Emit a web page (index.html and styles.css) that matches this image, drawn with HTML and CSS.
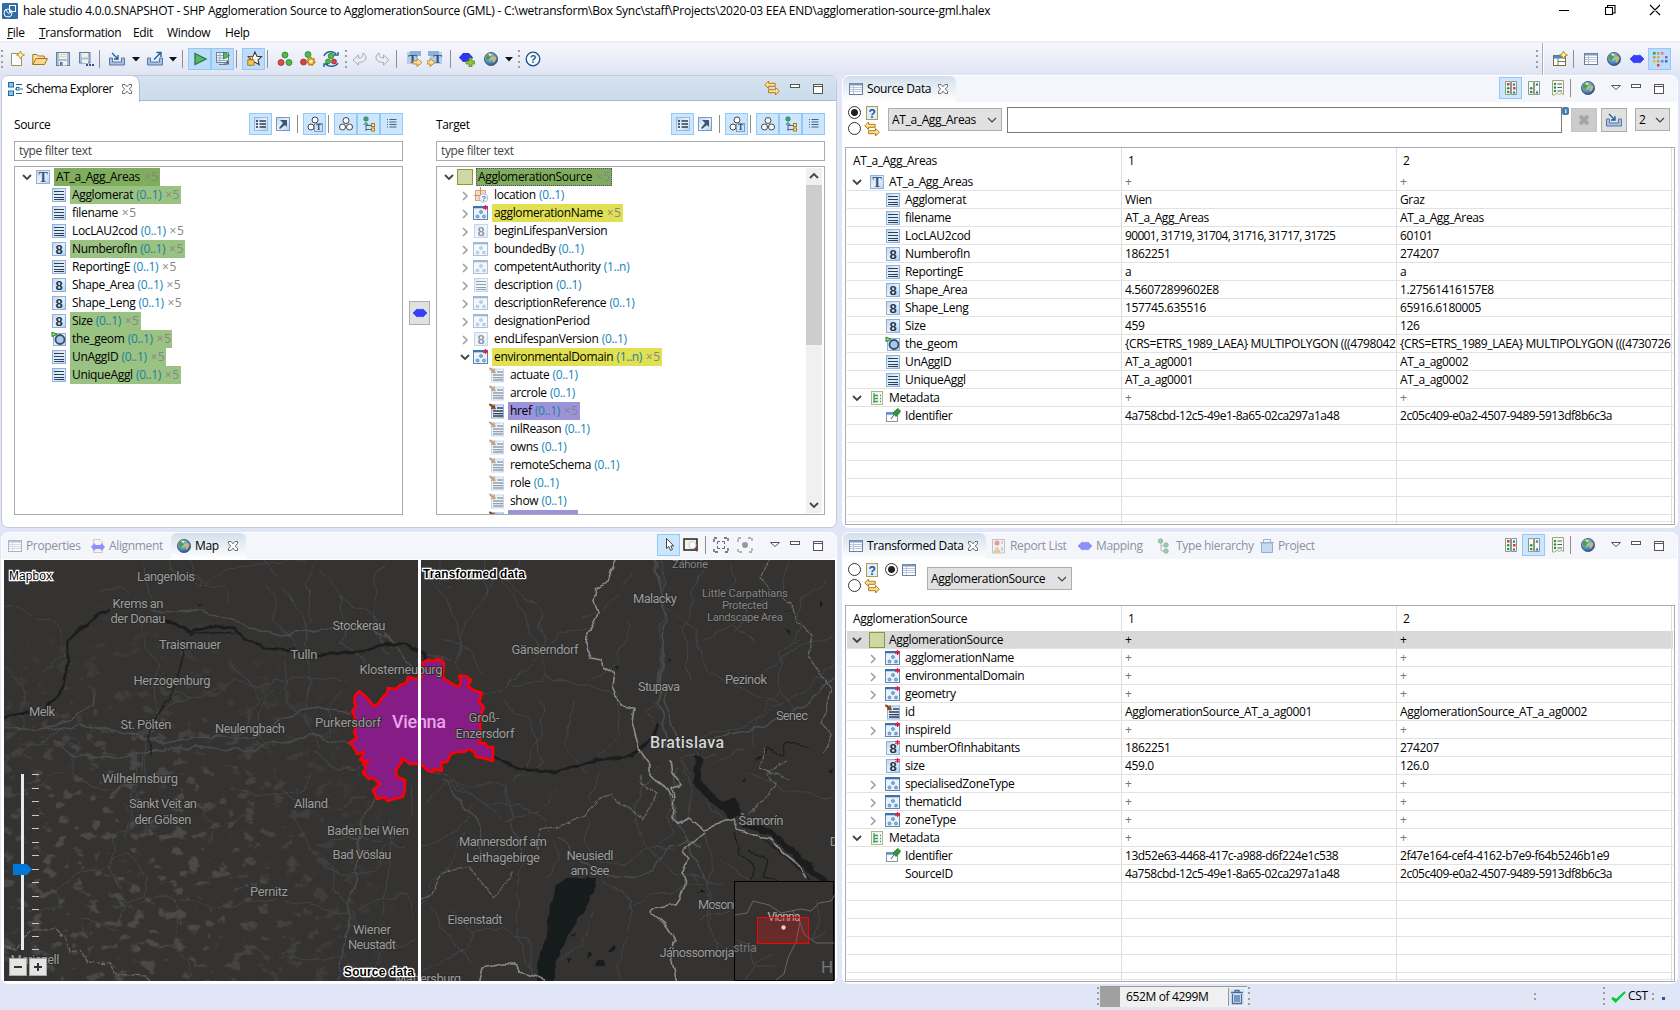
FILE: index.html
```html
<!DOCTYPE html>
<html lang="en">
<head>
<meta charset="utf-8">
<title>hale studio</title>
<link rel="stylesheet" href="styles.css">
</head>
<body>
<svg class="defs" aria-hidden="true">
<defs>
<linearGradient id="gb" x1="0" y1="0" x2="1" y2="1"><stop offset="0" stop-color="#b9d3f1"/><stop offset=".5" stop-color="#e8f4fd"/><stop offset="1" stop-color="#b4cdee"/></linearGradient>
<radialGradient id="gg" cx=".4" cy=".35" r=".7"><stop offset="0" stop-color="#d8f0fa"/><stop offset=".45" stop-color="#6aa3c8"/><stop offset="1" stop-color="#1f4c86"/></radialGradient>
<linearGradient id="gy" x1="0" y1="0" x2="0" y2="1"><stop offset="0" stop-color="#fff6cf"/><stop offset="1" stop-color="#f2c868"/></linearGradient>
</defs>
<symbol id="str" viewBox="0 0 16 16"><rect x="1.500" y="1.500" width="13" height="13" fill="url(#gb)" stroke="#8fb0dc"/><path d="M3 4.500h10M3 7.500h10M3 10.500h10M3 12.500h10" stroke="#2e4056" stroke-width="1.200"/></symbol>
<symbol id="num" viewBox="0 0 16 16"><rect x="1.500" y="1.500" width="13" height="13" fill="url(#gb)" stroke="#8fb0dc"/><text x="8" y="12.600" text-anchor="middle" font-family="Liberation Sans" font-weight="700" font-size="13" fill="#22364c">8</text></symbol>
<symbol id="typ" viewBox="0 0 16 16"><rect x="1.500" y="1.500" width="13" height="13" fill="url(#gb)" stroke="#8fb0dc"/><text x="8" y="12.500" text-anchor="middle" font-family="Liberation Serif" font-weight="700" font-size="14" fill="#3c5676">T</text></symbol>
<symbol id="cpx" viewBox="0 0 16 16"><rect x=".5" y="1.500" width="14" height="13" fill="#e8f3fc" stroke="#5f84b4"/><path d="M0 2.200h15" stroke="#3973ab" stroke-width="2.200"/><g fill="#8db4e0" stroke="#3c6ba8" stroke-width=".6"><circle cx="8" cy="7" r="1.500"/><circle cx="4.500" cy="11.500" r="1.500"/><circle cx="11" cy="11.500" r="1.500"/></g></symbol>
<symbol id="star" viewBox="0 0 16 16"><path d="M12.500 0v5M10.200 1.200l4.600 2.600M14.800 1.200l-4.600 2.600" stroke="#f01840" stroke-width="1.200"/></symbol>
<symbol id="att" viewBox="0 0 16 16"><rect x="2.500" y="2" width="12" height="13" fill="url(#gb)" stroke="#8fb0dc"/><path d="M8 5h6M4 8h10M4 10.700h10M4 13h10" stroke="#2e4056" stroke-width="1.300"/><path d="M0 1h2l3 2.500V1.500L6.500 6 2 5.500h2L1 2.500z" fill="#8a4208" stroke="#8a4208" stroke-width=".6"/></symbol>
<symbol id="geo" viewBox="0 0 16 16"><rect x="2.500" y="2.500" width="12" height="12" fill="url(#gb)" stroke="#8fb0dc"/><circle cx="9" cy="8.500" r="4.500" fill="#a9c8ea" stroke="#3b4d68" stroke-width="1.800"/><path d="M1 1l5 2.300-5 2.200z" fill="#9fe08a" stroke="#14861e"/></symbol>
<symbol id="box" viewBox="0 0 16 16"><rect x=".5" y=".5" width="15" height="15" fill="#cfd7a4" stroke="#8a9a32"/></symbol>
<symbol id="loc" viewBox="0 0 16 16"><rect x="2.500" y="3.500" width="10" height="10" fill="#f6d9c2" stroke="#dba378"/><path d="M7.500 0v14M1 8.500h13" stroke="#c98f68"/><circle cx="10.500" cy="11" r="4.200" fill="#edf4fb" stroke="#a9bdd8"/><text x="10.500" y="14" text-anchor="middle" font-family="Liberation Sans" font-weight="700" font-size="8" fill="#5683b4">?</text></symbol>
<symbol id="meta" viewBox="0 0 16 16"><rect x="2.500" y="1.500" width="11" height="13" fill="#f2faf2" stroke="#a7b78b"/><path d="M5 3v10M5 5.500h4M5 8.500h4M5 11.500h4M11 5.500h1M11 8.500h1M11 11.500h1" stroke="#3f9a5a" stroke-width="1.300" fill="none"/></symbol>
<symbol id="idf" viewBox="0 0 16 16"><rect x="1.500" y="4.500" width="11" height="9" fill="#fff" stroke="#8a93a8"/><path d="M1 5.500h10" stroke="#5c93cc" stroke-width="2.500"/><path d="M6 11l3-4" stroke="#555"/><path d="M8 5l3-3 2-1.500L15.500 3 14 5.500 11 8.500z" fill="#2f9a3c" stroke="#1a6a26" stroke-width=".7"/></symbol>
<symbol id="tab" viewBox="0 0 16 16"><rect x="1.500" y="2.500" width="13" height="11" fill="#fff" stroke="#6b7f9e"/><path d="M2 3.500h12" stroke="#7e97bb" stroke-width="2"/><path d="M2 6.500h12M2 8.500h12M2 10.500h12M5.500 4v9" stroke="#b9c6da"/></symbol>
<symbol id="globe" viewBox="0 0 16 16"><circle cx="8" cy="8" r="6.600" fill="url(#gg)" stroke="#3d5877" stroke-width=".8"/><path d="M3 5l3-2.500 3 1-.5 2.500L6.500 8 5 10 3 8z" fill="#5a9a45"/><path d="M9 6.500l3-1.500 1.500 2L12 10.500l-2 1.500-.5-3z" fill="#cfb56a"/><path d="M5 2.500l4 1-2 2z" fill="#e9f4d0"/></symbol>
<symbol id="swap" viewBox="0 0 16 16"><path d="M.8 4.800L4.600 1v2.300h6.600v3H4.600v2.300z" fill="url(#gy)" stroke="#b87a0e"/><path d="M15.300 11.200l-3.800-3.800v2.300H4.600v3h6.900V15z" fill="url(#gy)" stroke="#b87a0e"/></symbol>
<symbol id="help" viewBox="0 0 16 16"><rect x="2.500" y="1.500" width="11" height="13" fill="#dff0fb" stroke="#b09a55"/><text x="8" y="12.500" text-anchor="middle" font-family="Liberation Sans" font-weight="700" font-size="12" fill="#17559c">?</text></symbol>
<symbol id="blue" viewBox="0 0 16 16"><path d="M1 8l4-4 1 .5h4l1-.5 4 4-4 4-1-.5H6l-1 .5z" fill="#3a3cff" stroke="#2a50f0" stroke-width=".8"/></symbol>
<symbol id="x" viewBox="0 0 12 12"><path d="M1.500 1.500H4l2 2.300 2-2.300h2.500v2.200L8.300 6l2.200 2.300v2.200H8L6 8.200l-2 2.300H1.500V8.300L3.700 6 1.500 3.700z" fill="#fdfdfd" stroke="#5a5a5a" stroke-width=".9"/></symbol>
<symbol id="schema" viewBox="0 0 16 16"><g fill="#8cc4f0" stroke="#1c6aa0"><rect x="1.500" y="1.500" width="5" height="4.500"/><rect x="1.500" y="10" width="5" height="4.500"/></g><path d="M9 3.500h6M8 8h2M13 8h3M9 12.500h6" stroke="#1c6aa0"/><rect x="9.500" y="6.500" width="2.500" height="2.500" fill="#fff" stroke="#1c6aa0"/></symbol>
<symbol id="min" viewBox="0 0 12 12"><rect x="1.500" y="1.500" width="9" height="3" fill="#fff" stroke="#555"/></symbol>
<symbol id="max" viewBox="0 0 12 12"><rect x="1.500" y="1.500" width="9" height="9" fill="#fff" stroke="#555"/><path d="M1 3.500h10" stroke="#555"/></symbol>
<symbol id="tri" viewBox="0 0 12 12"><path d="M1.500 2.500h9L6 6.500z" fill="#fff" stroke="#555"/></symbol>
<symbol id="list" viewBox="0 0 16 16"><rect x="1.500" y="1.500" width="13" height="13" fill="url(#gb)" stroke="#9cb8dd"/><path d="M3 5h2M3 8h2M3 11h2" stroke="#1a2c44" stroke-width="1.500"/><path d="M6.500 5H13M6.500 8H13M6.500 11H13" stroke="#2b3c54" stroke-width="1.400"/></symbol>
<symbol id="ne" viewBox="0 0 16 16"><rect x="1.500" y="1.500" width="13" height="13" fill="url(#gb)" stroke="#7e98c4"/><path d="M5 4h7v7l-2-2-5 4-1-1 4-5z" fill="#41546e"/></symbol>
<symbol id="tri3" viewBox="0 0 16 16"><g fill="#fff" stroke="#444" stroke-width="1"><circle cx="8" cy="4.500" r="3"/><circle cx="4.500" cy="11" r="3"/><circle cx="11.500" cy="11" r="3"/></g></symbol>
<symbol id="tri3t" viewBox="0 0 16 16"><g fill="#fff" stroke="#444"><circle cx="8" cy="4" r="3"/><circle cx="4" cy="11" r="3"/></g><rect x="7.500" y="7.500" width="8" height="8" fill="#cfe2f8" stroke="#7c9cc8"/><text x="11.500" y="14.300" text-anchor="middle" font-family="Liberation Serif" font-weight="700" font-size="8" fill="#27425f">T</text></symbol>
<symbol id="hier" viewBox="0 0 16 16"><circle cx="5" cy="3" r="2.300" fill="#3fa46b" stroke="#1c7d48" stroke-width=".6"/><path d="M5 15V7M2.800 9L5 6.500 7.200 9M5 9.500h5M5 13.500h5" fill="none" stroke="#48637f"/><g fill="#ffe28a" stroke="#a07c1c"><rect x="10.500" y="7.500" width="3" height="3"/><rect x="10.500" y="12" width="3" height="3"/></g></symbol>
<symbol id="lines" viewBox="0 0 16 16"><path d="M3 3.500h1M3 6h1M3 8.500h1M3 11h1M5.500 3.500H12.500M5.500 6H12.500M5.500 8.500H12.500M5.500 11H12.500" stroke="#4a6078"/></symbol>
<symbol id="new" viewBox="0 0 16 16"><path d="M2.500 2.500h7l3 3v9h-10z" fill="#fbfdff" stroke="#a39455"/><path d="M11.500 0l1.300 2.700L15.500 4l-2.700 1.300L11.500 8l-1.300-2.700L7.500 4l2.700-1.300z" fill="#fff0a8" stroke="#b08a16" stroke-width=".8"/></symbol>
<symbol id="open" viewBox="0 0 16 16"><path d="M.8 13.500V3.500h4l1.500 1.500h6v3" fill="#fbe3a6" stroke="#a8741a"/><path d="M.8 13.500L4 7.500h11.500l-3 6z" fill="#fbd889" stroke="#a8741a"/></symbol>
<symbol id="save" viewBox="0 0 16 16"><rect x="1.500" y="1.500" width="13" height="13" fill="#a9bfd9" stroke="#677f9f"/><rect x="4" y="2" width="8" height="6" fill="#f1f1dc"/><path d="M4.500 3.500h7M4.500 5.500h7" stroke="#c8cbb5" stroke-width=".7"/><rect x="4" y="10" width="8" height="4.500" fill="#eef2f6"/><rect x="5" y="11" width="2.500" height="3.500" fill="#5a7290"/></symbol>
<symbol id="savea" viewBox="0 0 16 16"><rect x="1.500" y="1.500" width="10.500" height="10.500" fill="#a9bfd9" stroke="#677f9f"/><rect x="3.500" y="2" width="6.500" height="4.500" fill="#f1f1dc"/><rect x="4" y="8.500" width="6" height="3.500" fill="#eef2f6"/><path d="M8 14h2M11 14h2M14 14h2" stroke="#2f4f92" stroke-width="2"/></symbol>
<symbol id="imp" viewBox="0 0 18 16"><path d="M1.500 7v7h15V7h-3v4h-9V7z" fill="#a9c2e4" stroke="#5876a8"/><path d="M4 2l5.500 5.500M10 4v4H6" fill="none" stroke="#1d5c96" stroke-width="1.300"/></symbol>
<symbol id="exp" viewBox="0 0 18 16"><path d="M1.500 7v7h15V7h-3v4h-9V7z" fill="#a9c2e4" stroke="#5876a8"/><path d="M8 8.500l7-7M10.500 1.500h4.500v4.500" fill="none" stroke="#1d5c96" stroke-width="1.300"/></symbol>
<symbol id="dd" viewBox="0 0 8 16"><path d="M0 6h8l-4 4.500z" fill="#111"/></symbol>
<symbol id="play" viewBox="0 0 16 16"><path d="M3 2.500l11 5.500-11 5.500z" fill="#5fb567" stroke="#1f7a3c" stroke-width="1.300"/></symbol>
<symbol id="playt" viewBox="0 0 16 16"><rect x="1.500" y="1.500" width="12" height="10" fill="#eef3f9" stroke="#74829c"/><path d="M2 4.500h11M2 7h11M2 9.500h11M5 2v9" stroke="#9eacc2"/><path d="M8.500 1v7l6-3.500z" fill="#5fb567" stroke="#1f7a3c" stroke-width=".8"/><path d="M4 13.500h8l-1-1.500H9" fill="none" stroke="#777"/><path d="M12 10l1.500 3.500" stroke="#555" stroke-width="1.500"/></symbol>
<symbol id="starl" viewBox="0 0 18 18"><path d="M10 1l2.200 5 5.300.5-4 3.600 1.200 5.200L10 12.500 5.500 15.500l1-5.400-4-3.600L8 6z" fill="#fff" stroke="#333" stroke-width="1.200"/><rect x="2" y="10" width="7" height="6" fill="#f4c655" stroke="#a3741a"/><path d="M3.500 10V8.500a2 2 0 0 1 4 0V10" fill="none" stroke="#a3741a" stroke-width="1.200"/></symbol>
<symbol id="rgb" viewBox="0 0 16 16"><g stroke-width=".7"><circle cx="8" cy="4" r="3" fill="#4dbb47" stroke="#26752a"/><circle cx="4" cy="11.500" r="3" fill="#e04c46" stroke="#8e2430"/><circle cx="12" cy="11.500" r="3" fill="#4dbb47" stroke="#26752a"/></g></symbol>
<symbol id="rgbg" viewBox="0 0 16 16"><g stroke-width=".7"><circle cx="8" cy="3.500" r="3" fill="#4dbb47" stroke="#26752a"/><circle cx="3.500" cy="11" r="3" fill="#d04446" stroke="#8e2430"/></g><circle cx="11" cy="10.500" r="3.300" fill="#ffe69a" stroke="#c98714" stroke-width="2.400" stroke-dasharray="2 .8"/><circle cx="11" cy="10.500" r="3" fill="#fbd365" stroke="#a86d10" stroke-width=".8"/><circle cx="11" cy="10.500" r="1" fill="#fff"/></symbol>
<symbol id="rgbr" viewBox="0 0 16 16"><g stroke-width=".7"><circle cx="8" cy="5" r="2.800" fill="#4dbb47" stroke="#26752a"/><circle cx="5" cy="10.500" r="2.500" fill="#4dbb47" stroke="#26752a"/><circle cx="11" cy="10.500" r="2.500" fill="#d04446" stroke="#8e2430"/></g><path d="M1 5c2-5 9-5.500 12-2M15 1v3h-4M15 12c-2 4-9 4-12 1.500M1 16v-3h4" fill="none" stroke="#23639a" stroke-width="1.500"/></symbol>
<symbol id="undo" viewBox="0 0 16 16"><path d="M1 9l5.500-5v3c4 0 4.500-2 4.500-5 5 3 4 9.500-4.500 9.500V14z" fill="#eceef5" stroke="#a9abb2"/></symbol>
<symbol id="redo" viewBox="0 0 16 16"><path d="M15 9L9.500 4v3C5.500 7 5 5 5 2 0 5 1 11.500 9.500 11.500V14z" fill="#eceef5" stroke="#a9abb2"/></symbol>
<symbol id="tr" viewBox="0 0 16 16"><rect x="1" y="1" width="11" height="12" fill="#b3cdee"/><rect x="4" y="0" width="11" height="5" fill="#8cb0de"/><text x="6.500" y="12" text-anchor="middle" font-family="Liberation Serif" font-weight="700" font-size="13" fill="#38536f">T</text><path d="M7 10h4V7.500l5 4-5 4V13H7z" fill="url(#gy)" stroke="#b87a0e" stroke-width=".8"/></symbol>
<symbol id="tl" viewBox="0 0 16 16"><rect x="3" y="1" width="12" height="12" fill="#b3cdee"/><rect x="1" y="0" width="11" height="5" fill="#8cb0de"/><text x="10.500" y="12" text-anchor="middle" font-family="Liberation Serif" font-weight="700" font-size="13" fill="#38536f">T</text><path d="M0 10h3V7.500l5 4-5 4V13H0z" fill="url(#gy)" stroke="#b87a0e" stroke-width=".8"/></symbol>
<symbol id="bluep" viewBox="0 0 16 16"><path d="M0 6.500l4-4.500h6l4 4.500-4 4.500H4z" fill="#2e35f2"/><path d="M10 7h3v3h3v3h-3v3h-3v-3H7v-3h3z" fill="#8dc63a" stroke="#4d7f1c" stroke-width=".7"/></symbol>
<symbol id="qm" viewBox="0 0 16 16"><circle cx="8" cy="8" r="6.800" fill="#f4f9ff" stroke="#1f5287" stroke-width="1.300"/><text x="8" y="12" text-anchor="middle" font-family="Liberation Sans" font-weight="700" font-size="11" fill="#1d5c9a">?</text></symbol>
<symbol id="persp" viewBox="0 0 16 16"><rect x="1.500" y="4.500" width="12" height="10" fill="#fff" stroke="#7a6f3c"/><path d="M2 6h11" stroke="#4a86c0" stroke-width="3"/><path d="M6 7v7M6 10.500h7" stroke="#6c7a60"/><path d="M11.500 0l1.300 2.700L15.500 4l-2.700 1.300L11.500 8l-1.300-2.700L7.500 4l2.700-1.300z" fill="#fff0a8" stroke="#b08a16" stroke-width=".9"/></symbol>
<symbol id="dots" viewBox="0 0 16 16"><path d="M1 1h2.500v2.500H1z" fill="#2f9a3c"/><path d="M5 1h2.500v2.500H5z" fill="#c09a5a"/><path d="M9 1h2.500v2.500H9z" fill="#ee7080"/><path d="M1 5h2.500v2.500H1z" fill="#a8aa50"/><path d="M5 5h2.500v2.500H5z" fill="#ff9a60"/><path d="M13 5h2.500v2.500H13z" fill="#7a67b4"/><path d="M1 9h2.500v2.500H1z" fill="#f0c020"/><path d="M5 9h2.500v2.500H5z" fill="#c49a70"/><path d="M9 9h2.500v2.500H9z" fill="#8088a0"/><path d="M13 9h2.500v2.500H13z" fill="#4466b8"/><path d="M5 13h2.500v2.500H5z" fill="#e04040"/></symbol>
<symbol id="cmp1" viewBox="0 0 16 16"><path d="M2.500 1.500h5v13h-5zM8.500 1.500h5v13h-5z" fill="#f7fbff" stroke="#8d9a7c"/><path d="M4 3h2.500v2.500H4zM10 7h2.500v2.500H10z" fill="#d93a3a"/><circle cx="5.200" cy="8.300" r="1.300" fill="#2f8a4a"/><circle cx="5.200" cy="12" r="1.300" fill="#2f8a4a"/><path d="M11 2.500l1.500 3h-3zM11 10.500l1.500 3h-3z" fill="#2c62b0"/></symbol>
<symbol id="cmp2" viewBox="0 0 16 16"><path d="M2.500 1.500h5v13h-5zM8.500 1.500h5v13h-5z" fill="#f7fbff" stroke="#8d9a7c"/><circle cx="5.200" cy="8.300" r="1.300" fill="#2f8a4a"/><circle cx="5.200" cy="12" r="1.300" fill="#2f8a4a"/><path d="M11 2.500l1.500 3h-3zM11 10.500l1.500 3h-3z" fill="#2c62b0"/></symbol>
<symbol id="cmp3" viewBox="0 0 16 16"><path d="M1.500 .5h11v14l-2-1.500-2 1.500-2-1.500-3 2h-2z" fill="#f4faf4" stroke="#9ba672"/><g fill="#2f8a4a"><circle cx="4" cy="4" r="1.200"/><circle cx="4" cy="7.500" r="1.200"/><circle cx="4" cy="11" r="1.200"/></g><path d="M6.500 4H11M6.500 7.500H11M6.500 11H11" stroke="#557"/></symbol>
<symbol id="align" viewBox="0 0 16 16"><path d="M3.500 1.500h7l2 2v11h-9z" fill="#f7f2e2" stroke="#b8ac80"/><path d="M1 9l3.500-4 1 2h5l1-2L15 9l-3.500 4-1-2h-5l-1 2z" fill="#3a3cff"/></symbol>
<symbol id="cursor" viewBox="0 0 16 16"><path d="M5.500 1.500v10l2.300-2 1.700 4 2-1-1.700-3.500h3z" fill="#fff" stroke="#444"/></symbol>
<symbol id="zoomb" viewBox="0 0 16 16"><path d="M1 2h13v11H1z" fill="#f1f3e6" stroke="#222" stroke-width="1.500"/><circle cx="9.500" cy="8" r="3.500" fill="#fff" stroke="#ccc"/><path d="M12 11l2.500 3" stroke="#8a3a20" stroke-width="2"/></symbol>
<symbol id="fit" viewBox="0 0 16 16"><path d="M1 5V1h4M11 1h4v4M15 11v4h-4M5 15H1v-4" fill="none" stroke="#555" stroke-width="1.300" stroke-dasharray="3 1"/><path d="M4.500 7V4.500H7M9 4.500h2.500V7M11.500 9v2.500H9M7 11.500H4.500V9" fill="none" stroke="#666"/></symbol>
<symbol id="fit2" viewBox="0 0 16 16"><path d="M1 5V1h4M11 1h4v4M15 11v4h-4M5 15H1v-4" fill="none" stroke="#999" stroke-width="1.300" stroke-dasharray="3 1"/><circle cx="8" cy="8" r="3" fill="#999"/></symbol>
<symbol id="rep" viewBox="0 0 16 16"><path d="M1.500 1.500h12V15h-12z" fill="#f3efe4" stroke="#999"/><circle cx="6" cy="5" r="2.500" fill="#e04a4a"/><path d="M6 9l3 5H3z" fill="#f2b04a" stroke="#b07a20" stroke-width=".6"/><path d="M11 3v3M11 9v4" stroke="#678"/></symbol>
<symbol id="thier" viewBox="0 0 16 16"><path d="M4 4v9h5M4 8h5" fill="none" stroke="#888"/><g fill="#4fa870" stroke="#2c7a4c" stroke-width=".7"><circle cx="3.500" cy="3" r="2.300"/><circle cx="9" cy="7" r="2.300"/><circle cx="9" cy="13" r="2.300"/></g></symbol>
<symbol id="proj" viewBox="0 0 16 16"><path d="M1 4.500h14M4.500 4V1.500h7V4" fill="none" stroke="#5c7da8"/><path d="M2.500 5h11v9.500h-11z" fill="#a4c4ee" stroke="#4a74ac"/></symbol>
<symbol id="dn" viewBox="0 0 16 16"><path d="M4 6l4 4 4-4" fill="none" stroke="#444" stroke-width="1.800"/></symbol>
<symbol id="rt" viewBox="0 0 16 16"><path d="M6 5l4 4-4 4" fill="none" stroke="#a0a0a0" stroke-width="1.600"/></symbol>
<symbol id="cdn" viewBox="0 0 16 16"><path d="M4 6l4 4 4-4" fill="none" stroke="#444" stroke-width="1.200"/></symbol>
<symbol id="logo" viewBox="0 0 16 16"><rect width="16" height="16" rx="1" fill="#2f6ea8"/><g fill="none" stroke="#fff"><circle cx="6" cy="10" r="4"/><rect x="7.500" y="2.500" width="6" height="6"/><path d="M3.500 6.500l3 4 4-2"/></g></symbol>
</svg>

<header class="title"><svg class="i"><use href="#logo"/></svg><span class="title-text">hale studio 4.0.0.SNAPSHOT - SHP Agglomeration Source to AgglomerationSource (GML) - C:\wetransform\Box Sync\staff\Projects\2020-03 EEA END\agglomeration-source-gml.halex</span>
<svg class="wincontrols" viewBox="0 0 110 22"><path d="M4 10.500h10M50.500 7.500h7v7h-7zM52.500 7V5.500h7.500v7.500H58M95 5l10 10M105 5L95 15" fill="none" stroke="#000" stroke-width="1.100"/></svg></header>
<nav class="menu"><span><u>F</u>ile</span><span><u>T</u>ransformation</span><span>Edit</span><span>Window</span><span>Help</span></nav>

<div class="maintool">
<div class="tools">
<b class="grip"></b><svg class="i"><use href="#new"/></svg><svg class="i"><use href="#open"/></svg><svg class="i"><use href="#save"/></svg><svg class="i"><use href="#savea"/></svg><b class="sep"></b><svg class="i w18"><use href="#imp"/></svg><svg class="i w8"><use href="#dd"/></svg><svg class="i w18"><use href="#exp"/></svg><svg class="i w8"><use href="#dd"/></svg><b class="sep"></b><span class="btn on"><svg class="i"><use href="#play"/></svg></span><span class="btn on"><svg class="i"><use href="#playt"/></svg></span><b class="sep"></b><span class="btn on"><svg class="i w18"><use href="#starl"/></svg></span><b class="sep"></b><svg class="i"><use href="#rgb"/></svg><svg class="i"><use href="#rgbg"/></svg><svg class="i"><use href="#rgbr"/></svg><b class="grip"></b><svg class="i"><use href="#undo"/></svg><svg class="i"><use href="#redo"/></svg><b class="sep"></b><svg class="i"><use href="#tr"/></svg><svg class="i"><use href="#tl"/></svg><b class="sep"></b><svg class="i"><use href="#bluep"/></svg><svg class="i"><use href="#globe"/></svg><svg class="i w8"><use href="#dd"/></svg><b class="grip"></b><svg class="i"><use href="#qm"/></svg>
</div>
<div class="persps"><b class="grip"></b><b class="edge"></b><svg class="i"><use href="#persp"/></svg><b class="sep"></b><svg class="i"><use href="#tab"/></svg><svg class="i"><use href="#globe"/></svg><svg class="i"><use href="#blue"/></svg><span class="btn on"><svg class="i"><use href="#dots"/></svg></span></div>
</div>

<main>
<section class="panel focus">
<div class="strip"><div class="tab wide"><svg class="i"><use href="#schema"/></svg><span>Schema Explorer</span><svg class="x"><use href="#x"/></svg></div>
<div class="ctl c3"><svg class="i"><use href="#swap"/></svg><svg class="x"><use href="#min"/></svg><svg class="x"><use href="#max"/></svg></div></div>
<div class="explorer">
<div class="side">
<div class="sidehead"><span>Source</span><div class="treebar"><span class="btn on"><svg class="i"><use href="#list"/></svg></span><svg class="i"><use href="#ne"/></svg><b class="sep"></b><span class="btn on"><svg class="i"><use href="#tri3t"/></svg></span><b class="sep"></b><span class="btn on"><svg class="i"><use href="#tri3"/></svg></span><span class="btn on"><svg class="i"><use href="#hier"/></svg></span><span class="btn on"><svg class="i"><use href="#lines"/></svg></span></div></div>
<div class="filter">type filter text</div>
<div class="tree">
<div class="r"><svg class="i"><use href="#dn"/></svg><svg class="i"><use href="#typ"/></svg><span class="g2">AT_a_Agg_Areas <s>×5</s></span></div>
<div class="r l1"><svg class="i"><use href="#str"/></svg><span class="g1">Agglomerat <em>(0..1)</em> <s>×5</s></span></div>
<div class="r l1"><svg class="i"><use href="#str"/></svg><span>filename <s>×5</s></span></div>
<div class="r l1"><svg class="i"><use href="#str"/></svg><span>LocLAU2cod <em>(0..1)</em> <s>×5</s></span></div>
<div class="r l1"><svg class="i"><use href="#num"/></svg><span class="g1">NumberofIn <em>(0..1)</em> <s>×5</s></span></div>
<div class="r l1"><svg class="i"><use href="#str"/></svg><span>ReportingE <em>(0..1)</em> <s>×5</s></span></div>
<div class="r l1"><svg class="i"><use href="#num"/></svg><span>Shape_Area <em>(0..1)</em> <s>×5</s></span></div>
<div class="r l1"><svg class="i"><use href="#num"/></svg><span>Shape_Leng <em>(0..1)</em> <s>×5</s></span></div>
<div class="r l1"><svg class="i"><use href="#num"/></svg><span class="g1">Size <em>(0..1)</em> <s>×5</s></span></div>
<div class="r l1"><svg class="i"><use href="#geo"/></svg><span class="g1">the_geom <em>(0..1)</em> <s>×5</s></span></div>
<div class="r l1"><svg class="i"><use href="#str"/></svg><span class="g1">UnAggID <em>(0..1)</em> <s>×5</s></span></div>
<div class="r l1"><svg class="i"><use href="#str"/></svg><span class="g1">UniqueAggl <em>(0..1)</em> <s>×5</s></span></div>
</div></div>
<div class="mid"><span class="push"><svg class="i"><use href="#blue"/></svg></span></div>
<div class="side">
<div class="sidehead"><span>Target</span><div class="treebar"><span class="btn on"><svg class="i"><use href="#list"/></svg></span><svg class="i"><use href="#ne"/></svg><b class="sep"></b><span class="btn on"><svg class="i"><use href="#tri3t"/></svg></span><b class="sep"></b><span class="btn on"><svg class="i"><use href="#tri3"/></svg></span><span class="btn on"><svg class="i"><use href="#hier"/></svg></span><span class="btn on"><svg class="i"><use href="#lines"/></svg></span></div></div>
<div class="filter">type filter text</div>
<div class="tree scrolls"><div class="rows">
<div class="r"><svg class="i"><use href="#dn"/></svg><svg class="i"><use href="#box"/></svg><span class="g2 focusring">AgglomerationSource <s>×5</s></span></div>
<div class="r l2"><svg class="i"><use href="#rt"/></svg><svg class="i"><use href="#loc"/></svg><span>location <em>(0..1)</em></span></div>
<div class="r l2"><svg class="i"><use href="#rt"/></svg><svg class="i"><use href="#cpx"/><use href="#star"/></svg><span class="ye">agglomerationName <s>×5</s></span></div>
<div class="r l2"><svg class="i"><use href="#rt"/></svg><svg class="i pale"><use href="#num"/></svg><span>beginLifespanVersion</span></div>
<div class="r l2"><svg class="i"><use href="#rt"/></svg><svg class="i pale"><use href="#cpx"/></svg><span>boundedBy <em>(0..1)</em></span></div>
<div class="r l2"><svg class="i"><use href="#rt"/></svg><svg class="i pale"><use href="#cpx"/></svg><span>competentAuthority <em>(1..n)</em></span></div>
<div class="r l2"><svg class="i"><use href="#rt"/></svg><svg class="i pale"><use href="#str"/></svg><span>description <em>(0..1)</em></span></div>
<div class="r l2"><svg class="i"><use href="#rt"/></svg><svg class="i pale"><use href="#cpx"/></svg><span>descriptionReference <em>(0..1)</em></span></div>
<div class="r l2"><svg class="i"><use href="#rt"/></svg><svg class="i pale"><use href="#cpx"/></svg><span>designationPeriod</span></div>
<div class="r l2"><svg class="i"><use href="#rt"/></svg><svg class="i pale"><use href="#num"/></svg><span>endLifespanVersion <em>(0..1)</em></span></div>
<div class="r l2"><svg class="i"><use href="#dn"/></svg><svg class="i"><use href="#cpx"/><use href="#star"/></svg><span class="ye">environmentalDomain <em>(1..n)</em> <s>×5</s></span></div>
<div class="r l3"><svg class="i pale"><use href="#att"/></svg><span>actuate <em>(0..1)</em></span></div>
<div class="r l3"><svg class="i pale"><use href="#att"/></svg><span>arcrole <em>(0..1)</em></span></div>
<div class="r l3"><svg class="i"><use href="#att"/></svg><span class="pu">href <em>(0..1)</em> <s>×5</s></span></div>
<div class="r l3"><svg class="i pale"><use href="#att"/></svg><span>nilReason <em>(0..1)</em></span></div>
<div class="r l3"><svg class="i pale"><use href="#att"/></svg><span>owns <em>(0..1)</em></span></div>
<div class="r l3"><svg class="i pale"><use href="#att"/></svg><span>remoteSchema <em>(0..1)</em></span></div>
<div class="r l3"><svg class="i pale"><use href="#att"/></svg><span>role <em>(0..1)</em></span></div>
<div class="r l3"><svg class="i pale"><use href="#att"/></svg><span>show <em>(0..1)</em></span></div>
<div class="r l3"><svg class="i"><use href="#att"/></svg><span class="pu stub"></span></div>
</div><div class="sbar"><svg class="i up"><use href="#dn"/></svg><div class="thumb"></div><svg class="i"><use href="#dn"/></svg></div></div></div>
</div>
</section>

<section class="panel">
<div class="strip"><div class="tab t-src"><svg class="i"><use href="#tab"/></svg><span>Source Data</span><svg class="x"><use href="#x"/></svg></div>
<div class="ctl c7"><span class="btn on"><svg class="i"><use href="#cmp1"/></svg></span><span class="btn"><svg class="i"><use href="#cmp2"/></svg></span><span class="btn"><svg class="i"><use href="#cmp3"/></svg></span><b class="sep"></b><svg class="i"><use href="#globe"/></svg><svg class="x"><use href="#tri"/></svg><svg class="x"><use href="#min"/></svg><svg class="x"><use href="#max"/></svg></div></div>
<div class="query">
<div class="radios"><i class="radio sel"></i><svg class="i"><use href="#help"/></svg><i class="radio"></i><svg class="i"><use href="#swap"/></svg></div>
<div class="combo cb-src"><span>AT_a_Agg_Areas</span><svg class="i"><use href="#cdn"/></svg></div>
<div class="qinput"></div><span class="info">i</span>
<div class="pb off"><svg class="i" viewBox="0 0 16 16"><path d="M4 4l8 8M12 4l-8 8" stroke="#a6a6a6" stroke-width="4"/></svg></div>
<div class="pb"><svg class="i w18"><use href="#imp"/></svg></div>
<div class="combo cb-n"><span>2</span><svg class="i"><use href="#cdn"/></svg></div>
</div>
<div class="table tall">
<div class="h"><span>AT_a_Agg_Areas</span><span>1</span><span>2</span></div>
<div class="t"><span><svg class="i ch"><use href="#dn"/></svg><svg class="i"><use href="#typ"/></svg>AT_a_Agg_Areas</span><span class="p">+</span><span class="p">+</span></div>
<div class="t"><span class="k"><svg class="i"><use href="#str"/></svg>Agglomerat</span><span>Wien</span><span>Graz</span></div>
<div class="t"><span class="k"><svg class="i"><use href="#str"/></svg>filename</span><span>AT_a_Agg_Areas</span><span>AT_a_Agg_Areas</span></div>
<div class="t"><span class="k"><svg class="i"><use href="#str"/></svg>LocLAU2cod</span><span class="seq">90001, 31719, 31704, 31716, 31717, 31725</span><span>60101</span></div>
<div class="t"><span class="k"><svg class="i"><use href="#num"/></svg>NumberofIn</span><span>1862251</span><span>274207</span></div>
<div class="t"><span class="k"><svg class="i"><use href="#str"/></svg>ReportingE</span><span>a</span><span>a</span></div>
<div class="t"><span class="k"><svg class="i"><use href="#num"/></svg>Shape_Area</span><span>4.56072899602E8</span><span>1.27561416157E8</span></div>
<div class="t"><span class="k"><svg class="i"><use href="#num"/></svg>Shape_Leng</span><span>157745.635516</span><span>65916.6180005</span></div>
<div class="t"><span class="k"><svg class="i"><use href="#num"/></svg>Size</span><span>459</span><span>126</span></div>
<div class="t"><span class="k"><svg class="i"><use href="#geo"/></svg>the_geom</span><span class="wkt">{CRS=ETRS_1989_LAEA} MULTIPOLYGON (((4798042</span><span class="wkt">{CRS=ETRS_1989_LAEA} MULTIPOLYGON (((4730726</span></div>
<div class="t"><span class="k"><svg class="i"><use href="#str"/></svg>UnAggID</span><span>AT_a_ag0001</span><span>AT_a_ag0002</span></div>
<div class="t"><span class="k"><svg class="i"><use href="#str"/></svg>UniqueAggl</span><span>AT_a_ag0001</span><span>AT_a_ag0002</span></div>
<div class="t"><span><svg class="i ch"><use href="#dn"/></svg><svg class="i"><use href="#meta"/></svg>Metadata</span><span class="p">+</span><span class="p">+</span></div>
<div class="t uuid"><span class="k"><svg class="i"><use href="#idf"/></svg>Identifier</span><span>4a758cbd-12c5-49e1-8a65-02ca297a1a48</span><span>2c05c409-e0a2-4507-9489-5913df8b6c3a</span></div>
<div class="t"><span></span><span></span><span></span></div><div class="t"><span></span><span></span><span></span></div><div class="t"><span></span><span></span><span></span></div><div class="t"><span></span><span></span><span></span></div><div class="t"><span></span><span></span><span></span></div><div class="t last"><span></span><span></span><span></span></div>
</div>
</section>

<section class="panel">
<div class="strip"><div class="tab t-prop dim"><svg class="i"><use href="#tab"/></svg><span>Properties</span></div><div class="tab t-align dim"><svg class="i"><use href="#align"/></svg><span>Alignment</span></div><div class="tab t-map"><svg class="i"><use href="#globe"/></svg><span>Map</span><svg class="x"><use href="#x"/></svg></div>
<div class="ctl c8"><span class="btn on"><svg class="i"><use href="#cursor"/></svg></span><svg class="i"><use href="#zoomb"/></svg><b class="sep"></b><svg class="i"><use href="#fit"/></svg><svg class="i"><use href="#fit2"/></svg><svg class="x"><use href="#tri"/></svg><svg class="x"><use href="#min"/></svg><svg class="x"><use href="#max"/></svg></div></div>
<svg class="map" viewBox="4 560 831 421">
<defs>
<filter id="relief" x="0" y="0" width="100%" height="100%"><feTurbulence type="fractalNoise" baseFrequency=".07 .1" numOctaves="3" seed="8"/><feColorMatrix values="0 0 0 0 .28  0 0 0 0 .28  0 0 0 0 .27  0 8 0 0 -4.600"/></filter>
<filter id="wiggle" filterUnits="userSpaceOnUse" x="4" y="560" width="831" height="421"><feTurbulence type="fractalNoise" baseFrequency=".05" numOctaves="2" seed="3"/><feDisplacementMap in="SourceGraphic" scale="13" xChannelSelector="R" yChannelSelector="G"/></filter>
<filter id="jag" filterUnits="userSpaceOnUse" x="4" y="560" width="831" height="421"><feTurbulence type="fractalNoise" baseFrequency=".12" numOctaves="1" seed="5"/><feDisplacementMap in="SourceGraphic" scale="6" xChannelSelector="R" yChannelSelector="G"/></filter>
<radialGradient id="fade" gradientUnits="userSpaceOnUse" cx="130" cy="880" r="290"><stop offset=".3" stop-color="#fff"/><stop offset="1" stop-color="#000"/></radialGradient><mask id="mk"><rect x="4" y="560" width="420" height="421" fill="url(#fade)"/></mask>
</defs>
<rect x="4" y="560" width="831" height="421" fill="#343332"/>
<g mask="url(#mk)"><rect x="4" y="560" width="420" height="421" filter="url(#relief)" opacity=".25"/></g>
<g fill="none" stroke="#444546" stroke-width="1" filter="url(#wiggle)">
<path d="M4 608l18 2 14 10 13-3 11 12 4 28M4 668l12 8 7 25 0 26-19 18M45 676l15-20 4 0M139 612l8 36 12 15-6 22 2 30-10 16-2 40M146 564l2 34 6 14M170 560l4 12 22 14 28 2 4 14M100 588l20 2 10 6M190 560l14 24 22-16 48-4 30-4M265 560l12 20 25 30 5 24 3 50-4 32 14 34M302 648l-28-26 0-22-10-16M315 560l-8 28 4 36M322 567l18 28 6 28-4 20 24 20M386 560l-14 14 4 30-6 24 20 20M340 595l34 20 12 40M172 690l28 8 24-10 10-8 24 6 35-10 60 6M190 694l-30 18-16 22 4 46M230 660l20 20 10 22-12 20-8 14M188 570l12 10-2 10M274 689l-16 28 4 22 10 14M285 662l0 40 30 24M330 735l-4-30 14-12M375 755l-18 14-24-4-20-12"/>
<path d="M4 762l22-18 18-4 20-14 14 16-6 28 10 12 36 12 22 30-30 14 4 30 12 36M60 770l-20 16-20 2M138 764l-4 38-8 36M126 848l-22 20-34 6-12 20 3 12-33 6M126 848l20 28-2 20-24 12-1 24-34-12-10 20M140 903l28-8 12 12-8 30 14 20 6 22M180 899l28 8 34-2 36-8M180 805l-16 20-14-6-12 18M246 815l-30 14-6 16M274 773l4 14 30 18 34 4 22-14M310 775l-10 14-36 8-30-8M292 820l18 28 22 18 0 26 20 12 4 24M322 866l26 10 30-8 6-20 24-24 2-40M332 840l34-2 40 10M390 820l2 50-10 48M350 918l24-18 34-4 6 20M366 978l20-30 34-8M284 902l34 4 30 10M256 948l16 8 38 4 30-4 30 24"/>
<path d="M425 656l28 6 18 24M425 575l24 28 12 34-6 30M454 660l10-34 20-26 2-40M501 560l-20 40M501 580l24 34 18 38 0 30-34 4M543 650l-28 30-34 16M543 672l30 14 44 8 2 40-20 24M543 650l16-14 30-12M441 640l26 10 16 24M425 800l22-16 40 20 30 0 26 14 16 40-12 22M447 784l58 0 0 20M505 785l10 40 10 34-8 26M425 764l20 12 58 42M587 820l-2 22 14 20 24 2 26-18 28 4M634 820l12 24 26 28 34 6M420 850l36-18 20-24M462 834l-20 40-24 30M431 906l20 36 24 24M451 910l20 22 30-2 30 12 0 34M519 893l-4 36 18 50M475 932l-8 20-42 18M612 884l18 18-2 32-8 30 0 16M627 910l30-16 26-6 40-4M603 880l24 20M561 958l20-14 12-34M690 872l14 20 10 30M655 850l16-20 0-30M660 560l4 40-6 80 0 30M661 600l34 30 10 40 40 20 34 14M660 700l-16 10 12 16M682 752l30-20 34-8 60-34 29-30M704 560l-20 70 10 50M704 640l30-18 20 20M790 560l-10 30-30 20-14 18M752 684l40-34 43-14M695 752l10 40 6 20 34 16M683 760l6 30-4 36M720 752l-40 8 10 12M745 770l40 20 50 10M720 860l40 26M710 940l60 40M700 920l30-10M706 832l8 40-8 30 10 50"/>
<path d="M520 560l-14 20 34 30 4 40M440 560l0 22 14 6M560 790l-20 22-34 8M630 620l-12 40-30 24M632 570l-20 30-30 20M574 700l-8 50 18 20M540 700l2 34-20 36M598 772l-8 30M780 690l-24 28-4 30M800 640l-18 10-4 34 20 30M830 580l-30 20-4 40M745 750l-34 14M500 700l30 20 12 40-30 22M660 770l-20 20-4 34M480 850l30 20M730 560l4 22-18 16"/>
</g>
<g fill="none" stroke="#4b4d4e" stroke-width="1.500" filter="url(#wiggle)"><path d="M4 728l36 2 40-6 30 10 60 8 30-6 40 2 24-6 20-16 34-12 36 10M40 730l30-12 28-24M52 740l20 14 54 4 40-12 0 0M418 742l-60 6-40-12-30 4-36 14-36-6-50 0M150 612l50-2 54 18 36 8 56-10 40 8 26 32M382 630l30 36M384 760l-10 40-14 22-4 60-10 44-8 54M442 780l36 40 4 30M656 560l10 60-8 70 10 60M662 690l20 60M692 750l36-18 40-6 40-24 27-28M676 766l-4 40 14 36 24 42M560 836l14 22 36 20 40-6 20-26 30-2"/></g>
<g fill="none" stroke="#1c1e1d" filter="url(#jag)"><path d="M0 718l24-6 20 2M44 710l18-20 6-30 0-20 30-26 12-4M154 620l24 4 12 8 24-6 20 2 10 10 20 10 30 2 14 6 24-2 30-2 24-8 20 0 18 10 6 22" stroke-width="2.800"/><path d="M190 634l20-2 24 2M184 640l-2 22-6 20-6 16-8 10-12 18-1 16 4 14" stroke-width="1.400"/><path d="M408 690l30 24 24 20 26 20 28 14 40 4 40-12 36-4 22-20 4-12" stroke-width="3"/><path d="M699 756l-2 26 16 18 20 12" stroke-width="7"/><path d="M728 800l8 18" stroke-width="15"/><path d="M742 824l28 8 20 18 40 38" stroke-width="6"/><path d="M734 832l6 22 14 12-4 18M748 850l20 10-4 16 14 4M760 836l30 24 20 20M756 760l12-12 14 8 4-14 24 6" stroke-width="1.200"/></g>
<g fill="#191b1a" filter="url(#jag)"><path d="M557 885l10-7 28-1-2 16-10 20-16 25-10 22-4 24h-16v-20l8-23 3-23 2-14z"/><path d="M612 948l4-2-2 6zM597 960l8 0 0 6-10 0zM588 950l4 4-3 4zM568 958l5 2-4 4zM572 935l4-2-2 5zM608 952l6-6 2 2-4 6zM668 659l4 0-2 4zM614 667l5-1-2 6zM785 628l6 2-2 5zM741 780l6-1-2 4zM785 611l8-1-6 2zM820 600l3 4-3 3zM828 770l6-2-2 5zM696 895l6-6 4 4-4-1zM155 602l5 2-3 2zM198 603l4 1-2 2z"/></g>
<g fill="none" stroke="#8a8a89" stroke-width="1.600" stroke-linejoin="round" filter="url(#jag)"><path d="M618 556l-6 12-4 12-12 10-2 12 4 12-10 20-2 10 4 14 12 2 2 8 10 6-2 12 6 14 4 6 12 2-2 14 8 30 10 14 0 10 18 14 4 8"/><path d="M670 760l2 12 8 12-8 4 2 10-2 20 8 6 10-6 14 12 16-8 14-4 4 12 16 6 16 2 10 12 18 14 8 14"/><path d="M705 832l-22 18 6 8-8 14 6 6-8 20-4 6-22 4-2 4 14 12 10 16-4 16 6 28"/><path d="M478 984l4-16 20-4 14 0 4 8 26 8"/></g>
<g fill="none" stroke="#696968" stroke-width="1.200" stroke-dasharray="5 1" filter="url(#jag)"><path d="M0 946l16 4 14-20 26 0 10 8 4 14 10-2 8 12 22 2 4 10 32 2 8 8M420 900l16-10 4-16 16-6 14 0 24 30 20-26M539 850l0-20 16-2 30-12 12-16 14-6 6 8 22 12 4 6 14-26-16-10 0-10M772 556l-12 22 12 14 18 10 8 20 14 14-4 20 14 20 10 14-6 20-4 14 10 10-8 20M790 780l-30 -12 4-20M788 762l-22 10 10 12-16 20-12 10"/></g>
<path class="agg" d="M417 679L408 677 406 683 400 685 396 689 388 688 387 693 382 698 378 704 373 706 370 701 364 695 359 691 355 696 354 702 356 706 352 712 355 716 354 721 357 725 354 732 357 738 350 742 356 751 357 754 364 752 360 760 369 762 363 763 366 768 363 773 369 779 373 778 380 784 373 790 377 799 385 797 387 801 394 799 403 797 405 790 405 780 397 777 396 770 402 762 402 758 410 764 417 764 422 765 428 771 433 772 434 769 442 771 441 763 447 762 451 754 457 752 464 752 470 749 474 752 476 757 483 758 493 761 493 747 487 747 485 743 479 743 481 738 480 725 481 715 484 707 479 702 482 693 473 690 468 686 471 680 466 676 459 676 461 683 458 687 451 683 443 678 444 663 439 659 433 661 427 660 422 663 424 671 421 677z"/>
<g class="names">
<g><text x="166" y="581" textLength="58">Langenlois</text><text x="138" y="608" textLength="51">Krems an</text><text x="138" y="623" textLength="55">der Donau</text><text x="190" y="649" textLength="62">Traismauer</text><text x="172" y="685" textLength="77">Herzogenburg</text><text x="42" y="716" textLength="26">Melk</text><text x="146" y="729" textLength="51">St. Pölten</text><text x="250" y="733" textLength="70">Neulengbach</text><text x="359" y="630" textLength="53">Stockerau</text><text x="304" y="659" textLength="27">Tulln</text><text x="401" y="674" textLength="83">Klosterneuburg</text><text x="348" y="727" textLength="66">Purkersdorf</text><text x="484" y="722" textLength="31">Groß-</text><text x="485" y="738" textLength="59">Enzersdorf</text><text x="545" y="654" textLength="67">Gänserndorf</text><text x="655" y="603" textLength="44">Malacky</text><text x="659" y="691" textLength="42">Stupava</text><text x="746" y="684" textLength="42">Pezinok</text><text x="792" y="720" textLength="32">Senec</text><text x="140" y="783" textLength="76">Wilhelmsburg</text><text x="163" y="808" textLength="68">Sankt Veit an</text><text x="163" y="824" textLength="57">der Gölsen</text><text x="311" y="808" textLength="34">Alland</text><text x="368" y="835" textLength="82">Baden bei Wien</text><text x="362" y="859" textLength="59">Bad Vöslau</text><text x="269" y="896" textLength="38">Pernitz</text><text x="372" y="934" textLength="38">Wiener</text><text x="372" y="949" textLength="48">Neustadt</text><text x="35" y="964" textLength="49">Mariazell</text><text x="428" y="983" textLength="66">Mattersburg</text><text x="475" y="924" textLength="55">Eisenstadt</text><text x="503" y="846" textLength="88">Mannersdorf am</text><text x="503" y="862" textLength="74">Leithagebirge</text><text x="590" y="860" textLength="47">Neusiedl</text><text x="590" y="875" textLength="39">am See</text><text x="761" y="825" textLength="45">Šamorín</text><text x="834" y="846">D</text><text x="721" y="909" textLength="46">Mosonm</text><text x="697" y="957" textLength="75">Jánossomorja</text></g>
<g class="sm"><text x="690" y="568" textLength="36">Záhorie</text><text x="745" y="597" textLength="86">Little Carpathians</text><text x="745" y="609" textLength="46">Protected</text><text x="745" y="621" textLength="76">Landscape Area</text></g>
<text class="cap" x="687" y="748" textLength="74">Bratislava</text><text class="vie" x="419" y="728" textLength="54">Vienna</text>
</g>
<rect x="418" y="560" width="3" height="421" fill="#fff"/>
<g class="outl"><text x="9" y="580" class="n" textLength="43">Mapbox</text><text x="423" y="578" textLength="102">Transformed data</text><text x="344" y="976" textLength="70">Source data</text></g>
<g><rect x="734.500" y="881.500" width="99" height="99" fill="#343332" stroke="#000"/><g fill="none" stroke="#686868"><path d="M735 915l12-2 6-12 16 4 12 8 20-4 10 2 8-8 12-2 6-10-2-8"/><path d="M792 910l8 12 4 12 12 9 18 0M800 922l-4 20-8 16-4 16-8 6"/></g><g fill="none" stroke="#464646"><path d="M735 940l14 4 4 20 20-10M816 900l4 20-8 20 14-8M745 980l10-14 20 0"/></g><text class="ov" x="784" y="921" textLength="33">Vienna</text><text class="ov d" x="745" y="952">stria</text><text class="ov d h" x="827" y="973">H</text><rect x="757.500" y="917.500" width="51" height="26" fill="rgba(255,20,20,.25)" stroke="#f00"/><circle cx="783.500" cy="927.500" r="2.200" fill="#f3cccc"/></g>
<rect x="21" y="774" width="3" height="176" fill="#e7eaea"/>
<path d="M32 774.500h7M32 788.500h7M32 801.500h7M32 815.500h7M32 828.500h7M32 842.500h7M32 855.500h7M32 869.500h7M32 882.500h7M32 896.500h7M32 909.500h7M32 923.500h7M32 936.500h7M32 949.500h7" stroke="#c9c9c9"/>
<path d="M13 864h14l5 5.500-5 5.500H13z" fill="#0078d7"/>
<g fill="#e4e4e2" stroke="#a8a8a8"><rect x="9.500" y="958.500" width="17" height="17"/><rect x="29.500" y="958.500" width="17" height="17"/></g><path d="M14 967h8M34 967h8M38 963v8" stroke="#333" stroke-width="2"/>
</svg>
</section>

<section class="panel">
<div class="strip"><div class="tab t-tra"><svg class="i"><use href="#tab"/></svg><span>Transformed Data</span><svg class="x"><use href="#x"/></svg></div><div class="tab t-rep dim"><svg class="i"><use href="#rep"/></svg><span>Report List</span></div><div class="tab t-mpg dim"><svg class="i"><use href="#blue"/></svg><span>Mapping</span></div><div class="tab t-typ dim"><svg class="i"><use href="#thier"/></svg><span>Type hierarchy</span></div><div class="tab t-prj dim"><svg class="i"><use href="#proj"/></svg><span>Project</span></div>
<div class="ctl c7"><span class="btn"><svg class="i"><use href="#cmp1"/></svg></span><span class="btn on"><svg class="i"><use href="#cmp2"/></svg></span><span class="btn"><svg class="i"><use href="#cmp3"/></svg></span><b class="sep"></b><svg class="i"><use href="#globe"/></svg><svg class="x"><use href="#tri"/></svg><svg class="x"><use href="#min"/></svg><svg class="x"><use href="#max"/></svg></div></div>
<div class="query low">
<div class="radios"><i class="radio"></i><svg class="i"><use href="#help"/></svg><i class="radio"></i><svg class="i"><use href="#swap"/></svg></div>
<div class="radios one"><i class="radio sel"></i><svg class="i"><use href="#tab"/></svg></div>
<div class="combo cb-tgt"><span>AgglomerationSource</span><svg class="i"><use href="#cdn"/></svg></div>
</div>
<div class="table">
<div class="h"><span>AgglomerationSource</span><span>1</span><span>2</span></div>
<div class="t hi"><span><svg class="i ch"><use href="#dn"/></svg><svg class="i"><use href="#box"/></svg>AgglomerationSource</span><span>+</span><span>+</span></div>
<div class="t"><span class="n1"><svg class="i ch"><use href="#rt"/></svg><svg class="i"><use href="#cpx"/><use href="#star"/></svg>agglomerationName</span><span class="p">+</span><span class="p">+</span></div>
<div class="t"><span class="n1"><svg class="i ch"><use href="#rt"/></svg><svg class="i"><use href="#cpx"/><use href="#star"/></svg>environmentalDomain</span><span class="p">+</span><span class="p">+</span></div>
<div class="t"><span class="n1"><svg class="i ch"><use href="#rt"/></svg><svg class="i"><use href="#cpx"/><use href="#star"/></svg>geometry</span><span class="p">+</span><span class="p">+</span></div>
<div class="t"><span class="k"><svg class="i"><use href="#att"/></svg>id</span><span>AgglomerationSource_AT_a_ag0001</span><span>AgglomerationSource_AT_a_ag0002</span></div>
<div class="t"><span class="n1"><svg class="i ch"><use href="#rt"/></svg><svg class="i"><use href="#cpx"/><use href="#star"/></svg>inspireId</span><span class="p">+</span><span class="p">+</span></div>
<div class="t"><span class="k"><svg class="i"><use href="#num"/><use href="#star"/></svg>numberOfInhabitants</span><span>1862251</span><span>274207</span></div>
<div class="t"><span class="k"><svg class="i"><use href="#num"/><use href="#star"/></svg>size</span><span>459.0</span><span>126.0</span></div>
<div class="t"><span class="n1"><svg class="i ch"><use href="#rt"/></svg><svg class="i"><use href="#cpx"/></svg>specialisedZoneType</span><span class="p">+</span><span class="p">+</span></div>
<div class="t"><span class="n1"><svg class="i ch"><use href="#rt"/></svg><svg class="i"><use href="#cpx"/></svg>thematicId</span><span class="p">+</span><span class="p">+</span></div>
<div class="t"><span class="n1"><svg class="i ch"><use href="#rt"/></svg><svg class="i"><use href="#cpx"/><use href="#star"/></svg>zoneType</span><span class="p">+</span><span class="p">+</span></div>
<div class="t"><span><svg class="i ch"><use href="#dn"/></svg><svg class="i"><use href="#meta"/></svg>Metadata</span><span class="p">+</span><span class="p">+</span></div>
<div class="t uuid"><span class="k"><svg class="i"><use href="#idf"/></svg>Identifier</span><span>13d52e63-4468-417c-a988-d6f224e1c538</span><span>2f47e164-cef4-4162-b7e9-f64b5246b1e9</span></div>
<div class="t uuid"><span class="k"><svg class="i"></svg>SourceID</span><span>4a758cbd-12c5-49e1-8a65-02ca297a1a48</span><span>2c05c409-e0a2-4507-9489-5913df8b6c3a</span></div>
<div class="t"><span></span><span></span><span></span></div><div class="t"><span></span><span></span><span></span></div><div class="t"><span></span><span></span><span></span></div><div class="t"><span></span><span></span><span></span></div><div class="t"><span></span><span></span><span></span></div><div class="t last"><span></span><span></span><span></span></div>
</div>
</section>
</main>
<footer><b class="grip"></b><div class="heap"><i></i><span>652M of 4299M</span><svg class="i" viewBox="0 0 16 16"><path d="M2 3.500h12M6 3V1.500h4V3M3.500 5v9.500h9V5M6 6v7M8 6v7M10 6v7" fill="none" stroke="#4a6c9c" stroke-width="1.300"/></svg></div><b class="grip"></b><b class="grip short"></b><b class="grip"></b><svg class="i" viewBox="0 0 16 16"><path d="M2 10l3.500 3.500L15 4 6.500 12z" fill="#0c3" stroke="#0c3" stroke-width="2"/></svg><span class="cst">CST</span><b class="grip short"></b><b class="bluedot"></b></footer>
</body>
</html>
```

FILE: styles.css
```css
* { box-sizing: border-box; }
html, body { margin: 0; height: 1010px; overflow: hidden; }
body { width: 1680px; background: #e1e6f6; color: #000; font: 12px/18px "Open Sans", "Noto Sans", sans-serif; letter-spacing: -.35px; white-space: nowrap; }
svg { display: block; flex: none; overflow: visible; }
.defs { position: absolute; width: 0; height: 0; }
.i { width: 16px; height: 16px; }
.w18 { width: 18px; }
.w8 { width: 8px; }
.x { width: 12px; height: 12px; }
.pale { opacity: .5; }
em { font-style: normal; color: #1584b8; margin-left: .5px; }
s { text-decoration: none; color: #858585; letter-spacing: .6px; margin-left: 1px; }
.sep { width: 1px; height: 18px; background: #8e8e8e; }
.grip { width: 2px; height: 18px; background: repeating-linear-gradient(#a09d94 0 2px, transparent 2px 5.500px); }
.btn { display: flex; align-items: center; justify-content: center; width: 23px; height: 22px; border: 1px solid transparent; }
.btn.on { background: #cce6fd; border-color: #93c9f7; }

.title { display: flex; height: 22px; background: #fff; padding-left: 2px; align-items: center; }
.title-text { margin-left: 5px; width: 1532px; letter-spacing: -.235px; }
.wincontrols { width: 110px; height: 22px; }
.menu { display: grid; grid-template-columns: 32px 94px 34px 58px 40px; padding-left: 7px; height: 21px; line-height: 21px; background: #fff; border-bottom: 2px solid #efefef; }
.maintool { display: flex; justify-content: space-between; height: 32px; background: linear-gradient(#f6f8fd, #dfe4f4); }
.tools, .persps { display: grid; align-items: center; }
.tools { padding-left: 1px; grid-template-columns: 8px 23px 23px 23px 21px 9px 24px 14px 23px 13px 6px 23px 25px 6px 25px 10px 23px 23px 22px 7px 22px 22px 10px 21px 23px 9px 24px 22px 13px 7px 16px; }
.persps { grid-template-columns: 6px 10px 21px 10px 23px 23px 19px 24px; padding-right: 8px; }
.maintool .btn.on { background: #bcdcf9; }
.edge { width: 2px; height: 32px; border-left: 1px solid #a9adb9; background: #fff; }

main { display: grid; grid-template: 453px 452px / 836px 836px; gap: 4px 5px; padding-left: 1px; }
.panel { background: #fff; border-radius: 7px; display: flex; flex-direction: column; overflow: hidden; border: 1px solid #fdfdff; }
.panel.focus { border: 1px solid #c3c9d8; }
.strip { display: flex; height: 26px; background: #f4f6fc; flex: none; }
.focus .strip { height: 25px; background: linear-gradient(#d5e3f0, #cbdbeb); border-bottom: 1px solid #b0b8cb; }
.tab { display: flex; align-items: center; padding-left: 5px; height: 26px; }
.tab span { margin-left: 3px; flex: 1; }
.t-src, .t-map, .t-tra { background: linear-gradient(#d3dfec, #fff); border-radius: 6px 6px 0 0; }
.tab .x { margin-right: 7px; }
.dim { color: #8d929c; }
.dim .i { opacity: .55; }
.wide { width: 138px; background: #fff; border-radius: 6px 8px 0 0; border-right: 1px solid #b0b8cb; }
.wide span { letter-spacing: -.5px; }
.wide .x { margin-right: 6px; }
.t-src { width: 113px; }
.t-prop { width: 83px; }
.t-align { width: 86px; }
.t-map { width: 75px; }
.t-tra { width: 143px; }
.t-rep { width: 86px; }
.t-mpg { width: 80px; }
.t-typ { width: 102px; }
.t-prj { width: 80px; }
.ctl { margin: 0 -1px 0 auto; display: grid; align-items: center; height: 24px; }
.ctl .x { margin-top: 1px; }
.c3 { grid-template-columns: 25px 23px 25px; }
.c7 { grid-template-columns: 23px 25px 23px 10px 30px 20px 23px 25px; }
.c8 { grid-template-columns: 26px 22px 8px 24px 32px 20px 23px 25px; }

.explorer { display: grid; grid-template-columns: 389px 33px 389px; padding: 11px 0 0 12px; }
.sidehead { display: flex; justify-content: space-between; height: 29px; line-height: 25px; }
.treebar { display: grid; height: 23px; grid-template-columns: 26px 22px 6px 25px 6px 23px 23px 23px; align-items: center; }
.filter { height: 20px; border: 1px solid #a9a9b0; padding-left: 4px; color: #444; line-height: 18px; }
.tree { margin-top: 5px; height: 349px; border: 1px solid #a9a9b0; padding-top: 1px; overflow: hidden; }
.scrolls { display: flex; justify-content: space-between; padding: 1px 2px 1px 0; }
.r { display: flex; align-items: center; height: 18px; padding-left: 4px; }
.r span { margin-left: 3px; padding: 0 1px 0 2px; height: 18px; }
.l1 { padding-left: 36px; }
.l2 { padding-left: 20px; }
.l3 { padding-left: 52px; }
.g2 { background: #80ad5d; }
.g1 { background: #9ac283; }
.g1 em, .ye em, .pu em { color: #1c809c; }
.ye { background: #e1e052; }
.pu { background: #9b94da; }
.r .stub { width: 70px; }
.focusring { outline: 1px dotted #5b4a78; outline-offset: -1px; }
.sbar { width: 16px; height: 345px; background: #f0f0f0; display: flex; flex-direction: column; }
.sbar .i:last-child { margin-top: auto; }
.up { transform: rotate(180deg); }
.thumb { height: 160px; background: #cdcdcd; margin-top: 1px; }
.mid { padding: 189px 0 0 6px; }
.push, .pb { display: flex; align-items: center; justify-content: center; background: #e1e1e1; border: 1px solid #adadad; }
.push { width: 21px; height: 24px; }

.query { display: flex; height: 45px; flex: none; padding: 4px 0 0 5px; }
.query.low { padding-top: 3px; height: 46px; }
.radios { display: grid; grid-template: 16px 16px / 16px 18px; width: 40px; }
.radios .i { margin-top: -1px; }
.radios.one { grid-template: 16px / 16px 18px; width: 42px; margin-left: -3px; }
.low .radios { margin-top: 1px; }
.radio { width: 13px; height: 13px; border: 1px solid #333; border-radius: 50%; background: #fff; }
.sel { background: radial-gradient(circle, #222 0 3px, #fff 4px); }
.combo { display: flex; justify-content: space-between; align-items: center; height: 23px; margin-top: 2px; padding: 0 1px 0 3px; border: 1px solid #adadad; background: #e1e1e1; }
.low .combo { margin-top: 5px; }
.cb-src { width: 114px; }
.cb-n { width: 35px; margin-left: 8px; }
.cb-tgt { width: 145px; }
.qinput { width: 555px; height: 26px; margin: 1px 0 0 5px; border: 1px solid #7a7a7a; }
.info { width: 7px; height: 8px; margin-top: 1px; background: #3f7cb0; color: #fff; font: 700 7px/8px "Liberation Serif", serif; text-align: center; border-radius: 2px; }
.pb { width: 26px; height: 24px; margin: 2px 0 0 2px; }
.pb + .pb { margin-left: 4px; }
.off { background: #ccc; border-color: #c4c4c4; }

.table { width: 830px; height: 377px; flex: none; margin-left: 2px; border: 1px solid #a9a9b0; overflow: hidden; padding: 0 1px; }
.tall { height: 378px; }
.h, .t { display: grid; grid-template-columns: 275px 275px 275px; height: 18px; border-bottom: 1px solid #e2e2e2; }
.h { height: 25px; border: 0; line-height: 25px; }
.h span, .t span { border-right: 1px solid #dedede; padding-left: 3px; overflow: hidden; }
.h span { padding-left: 6px; }
.t span { line-height: 17px; height: 17px; }
.t > span:first-child { display: flex; align-items: center; padding-left: 2px; }
.t > span:first-child .i { margin-right: 4px; }
.t > .n1:first-child { padding-left: 18px; }
.t > .k:first-child { padding-left: 38px; }
.t .p { color: #777; }
.t .seq { letter-spacing: -.670px; }
.t .wkt { letter-spacing: -.400px; }
.uuid span + span { letter-spacing: -.480px; }
.hi { background: #d9d9d9; }
.last { height: 7px; }
.map { width: 831px; height: 421px; margin: 1px 0 0 2px; overflow: hidden; }

.names text { font: 13px Roboto, sans-serif; fill: #9c9c9c; text-anchor: middle; paint-order: stroke; stroke: #2a2a29; stroke-width: 1.600px; letter-spacing: 0; }
.names .sm text { font-size: 11.500px; fill: #868686; }
.names text.cap { font-size: 16px; font-weight: 500; fill: #d4d4d4; }
.names text.vie { font-size: 18px; font-weight: 500; fill: #e8a4e8; stroke: none; }
.agg { fill: #861c86; stroke: #f00; stroke-width: 2.500px; stroke-linejoin: round; }
.outl text { font: 700 12px "Liberation Sans", sans-serif; fill: #000; stroke: #fff; stroke-width: 2.500px; paint-order: stroke; letter-spacing: 0; }
.outl text.n { font-weight: 400; }
.ov { font: 12px Roboto, sans-serif; fill: #b9b9b9; text-anchor: middle; letter-spacing: 0; }
.ov.d { fill: #777; }
.ov.h { font-size: 17px; }

footer { display: grid; grid-template-columns: 3px 148px 286px 69px 7px 18px 24px 10px 6px; align-items: center; height: 24px; padding-left: 1097px; }
.heap { display: flex; align-items: center; width: 147px; height: 21px; background: #f0f0f0; border-top: 1px solid #999; }
.heap i { width: 20px; height: 20px; background: #a0a0a0; }
.heap span { width: 109px; padding-left: 6px; border-right: 1px solid #999; }
.heap .i { background: #d8e7f8; }
.short { height: 7px; }
.bluedot { width: 3px; height: 3px; background: #2c52b8; margin-top: 5px; }
```
